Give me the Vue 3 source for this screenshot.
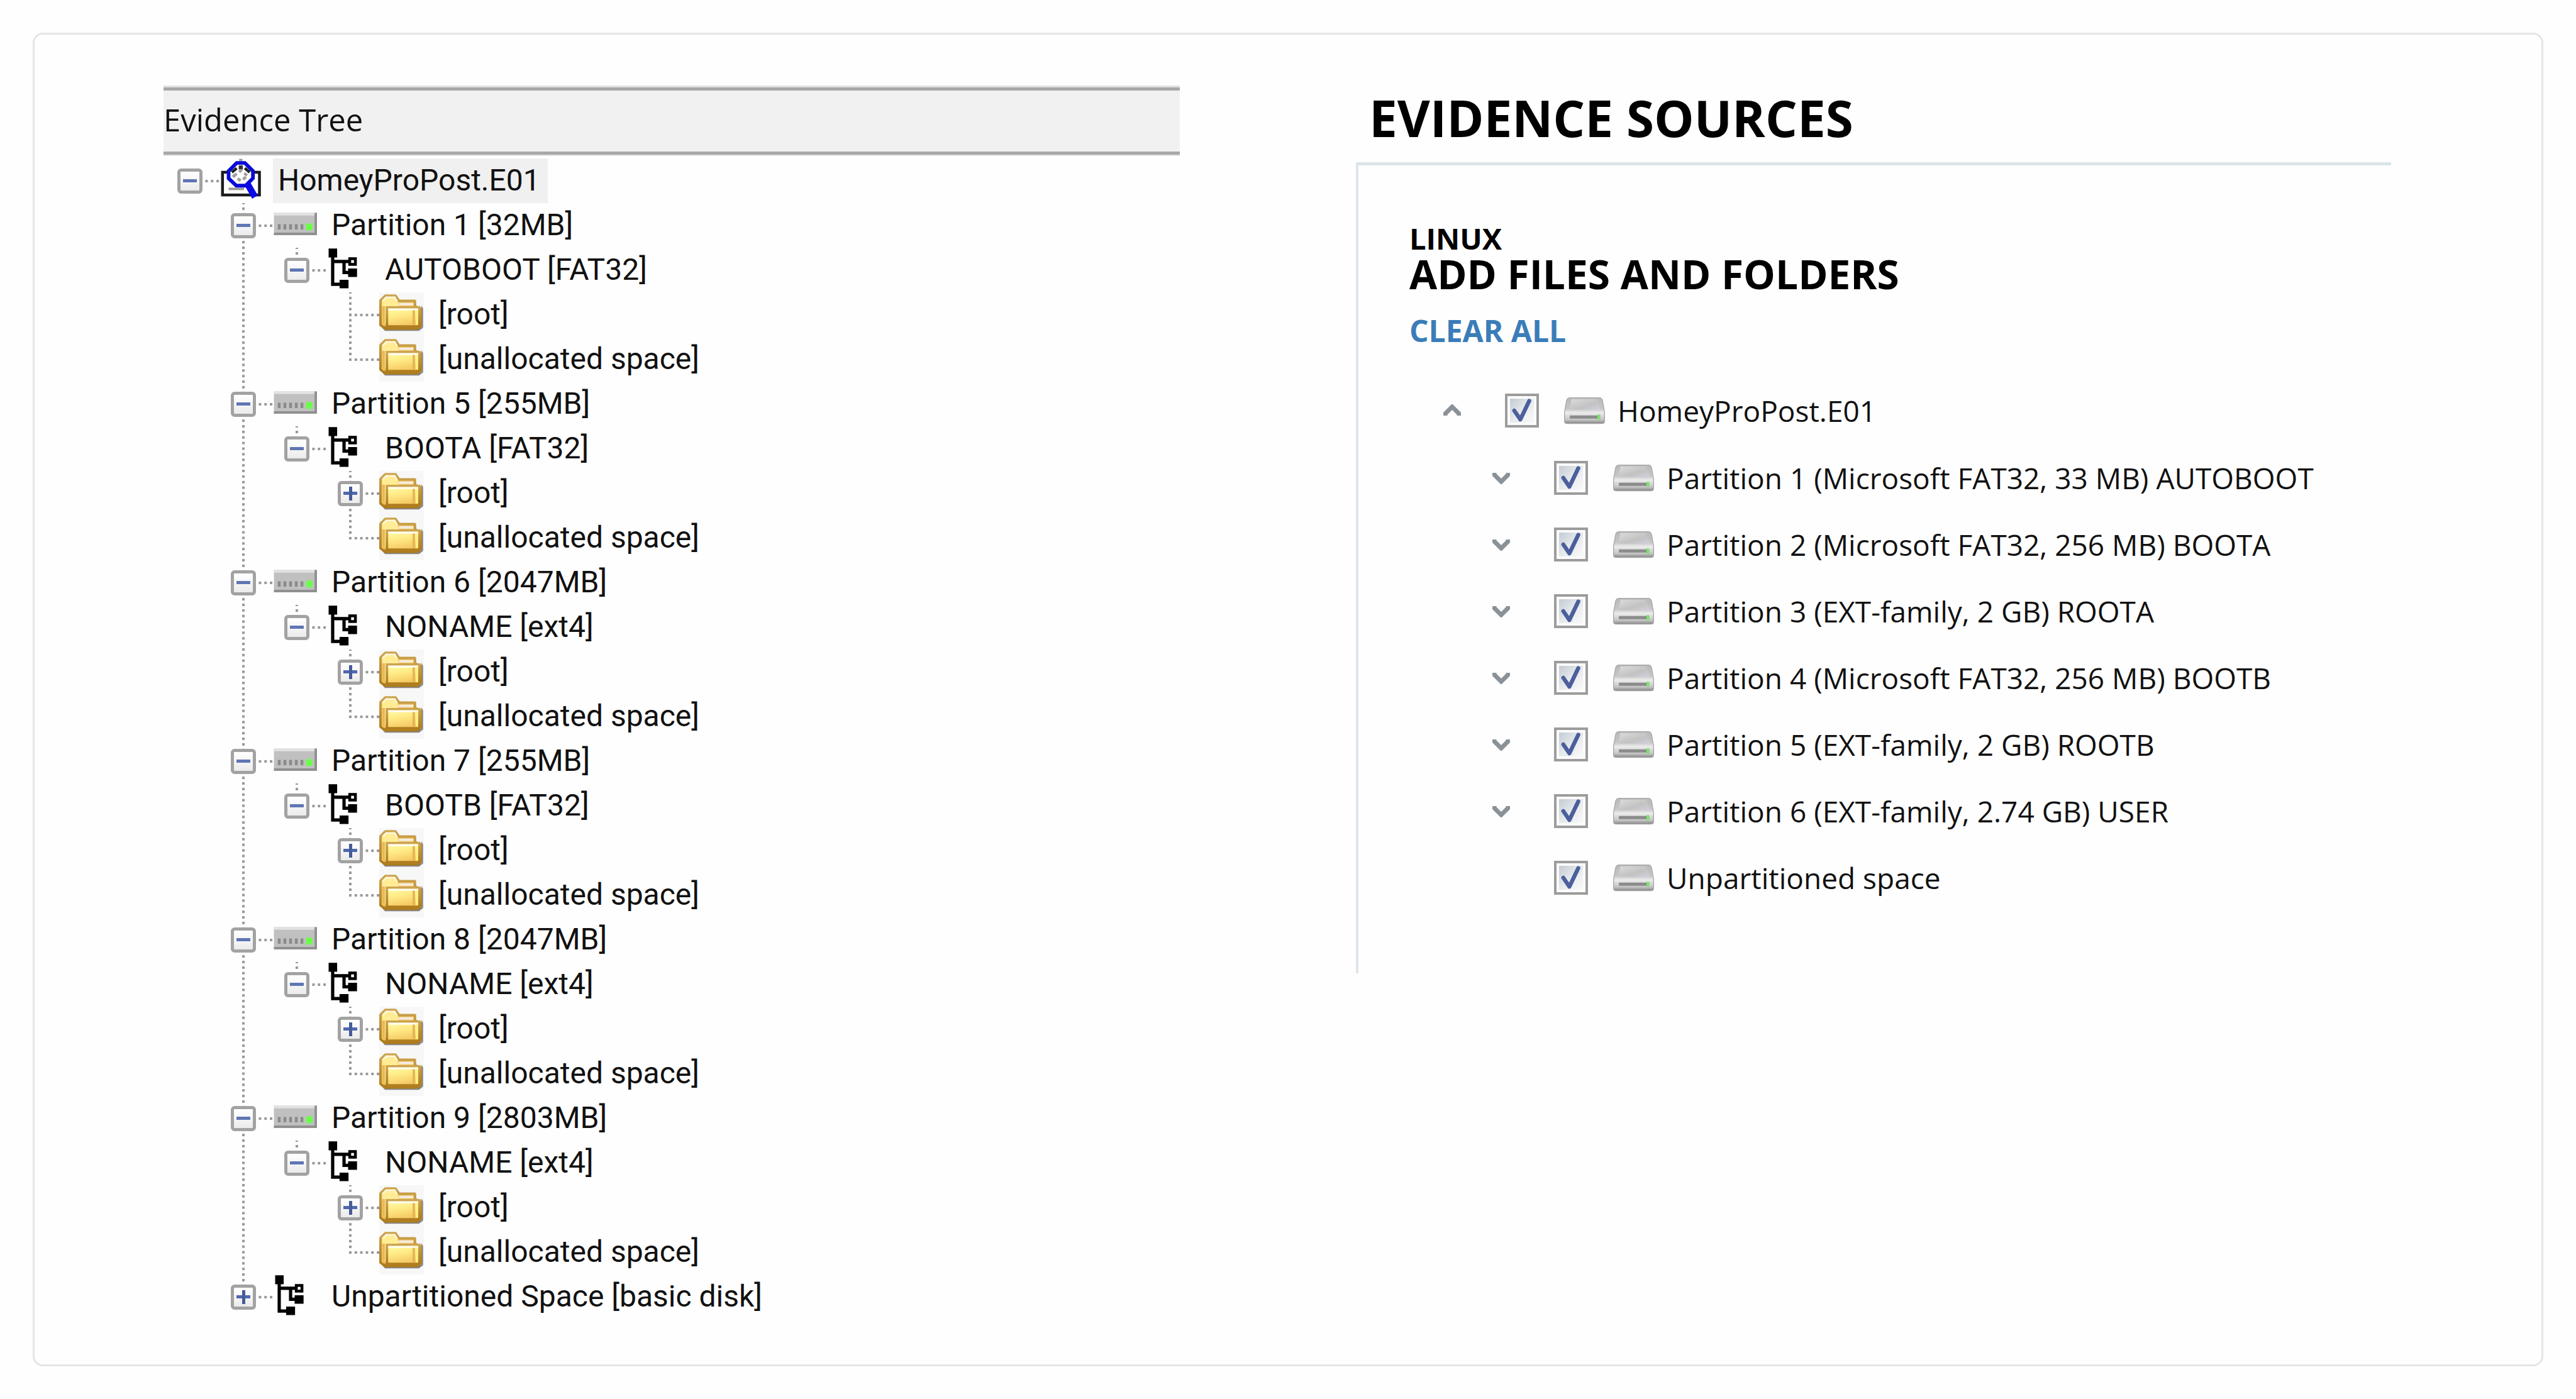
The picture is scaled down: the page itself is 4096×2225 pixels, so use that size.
<script setup>
import { defineComponent, h } from 'vue'

const volume = (name, rootLeaf) => ({
  label: name,
  icon: 'volume',
  open: true,
  children: [
    { label: '[root]', icon: 'folder', leaf: rootLeaf },
    { label: '[unallocated space]', icon: 'folder', leaf: true },
  ],
})

const partition = (label, name, rootLeaf = false) => ({
  label,
  icon: 'disk',
  open: true,
  children: [volume(name, rootLeaf)],
})

const tree = [
  {
    label: 'HomeyProPost.E01',
    icon: 'image',
    open: true,
    selected: true,
    children: [
      partition('Partition 1 [32MB]', 'AUTOBOOT [FAT32]', true),
      partition('Partition 5 [255MB]', 'BOOTA [FAT32]'),
      partition('Partition 6 [2047MB]', 'NONAME [ext4]'),
      partition('Partition 7 [255MB]', 'BOOTB [FAT32]'),
      partition('Partition 8 [2047MB]', 'NONAME [ext4]'),
      partition('Partition 9 [2803MB]', 'NONAME [ext4]'),
      { label: 'Unpartitioned Space [basic disk]', icon: 'volume' },
    ],
  },
]

const sources = [
  { id: 'src-0', label: 'HomeyProPost.E01', toggle: 'up' },
  { id: 'src-1', label: 'Partition 1 (Microsoft FAT32, 33 MB) AUTOBOOT', toggle: 'down', child: true },
  { id: 'src-2', label: 'Partition 2 (Microsoft FAT32, 256 MB) BOOTA', toggle: 'down', child: true },
  { id: 'src-3', label: 'Partition 3 (EXT-family, 2 GB) ROOTA', toggle: 'down', child: true },
  { id: 'src-4', label: 'Partition 4 (Microsoft FAT32, 256 MB) BOOTB', toggle: 'down', child: true },
  { id: 'src-5', label: 'Partition 5 (EXT-family, 2 GB) ROOTB', toggle: 'down', child: true },
  { id: 'src-6', label: 'Partition 6 (EXT-family, 2.74 GB) USER', toggle: 'down', child: true },
  { id: 'src-7', label: 'Unpartitioned space', child: true },
]

const icons = {
  image: `
    <rect x="9" y="34" width="91" height="56" fill="#fff" stroke="#1c1c1c" stroke-width="7"/>
    <path d="M24 75H62" stroke="#999" stroke-width="6"/>
    <path d="M44 11H64L84 31V49L66 67H43L24 49V31Z" fill="#fff" stroke="#0a0ad8" stroke-width="9"/>
    <path d="M32 34L44 24M76 34L64 24" stroke="#222" stroke-width="7"/>
    <path d="M54 17V27" stroke="#333" stroke-width="10"/>
    <path d="M37 43L54 30L71 43L54 55Z" fill="none" stroke="#a0a0a0" stroke-width="7" stroke-dasharray="9 7"/>
    <path d="M54 1V6" stroke="#999" stroke-width="8"/>
    <path d="M69 60L78 76L89 95" fill="none" stroke="#0a0ae6" stroke-width="16"/>`,
  disk: `
    <path d="M4 24H110V79H4Z" fill="#c0c0c0"/>
    <path d="M4 27H105" stroke="#e2e2e2" stroke-width="7"/>
    <path d="M4 76H107V24" fill="none" stroke="#909090" stroke-width="6"/>
    <path d="M17 52V65M31 52V65M45 52V65M59 52V65M73 52V65" stroke="#8a8a8a" stroke-width="7"/>
    <rect x="83" y="50" width="16" height="17" rx="3" fill="#6dfb4d"/>`,
  volume: `
    <path d="M7 2H28V24H7ZM34 79H56V100H34ZM55 51H77V72H55Z" fill="#000"/>
    <path d="M17 14V90H40M17 34H57M45 34V61H58" fill="none" stroke="#000" stroke-width="8"/>
    <rect x="59" y="27" width="14" height="14" fill="#fff" stroke="#000" stroke-width="7"/>`,
  folder: `
    <defs>
      <linearGradient id="folderFace" x1="0" y1="0" x2="0.3" y2="1"><stop offset="0" stop-color="#ffffa6"/><stop offset="0.5" stop-color="#ffea86"/><stop offset="1" stop-color="#f5c964"/></linearGradient>
      <linearGradient id="folderEdge" x1="0" y1="0" x2="0" y2="1"><stop offset="0" stop-color="#cda450"/><stop offset="1" stop-color="#ad7c1c"/></linearGradient>
    </defs>
    <rect width="110" height="110" fill="#f7f7f7"/>
    <path d="M8 88L14 95H98L108 87V40L104 32V86Z" fill="#85858c"/>
    <path d="M3 20L15 8H40L49 21H88V34L102 40V82L94 89H14L3 80Z" fill="#f0c45e" stroke="url(#folderEdge)" stroke-width="6" stroke-linejoin="round"/>
    <path d="M7 22L17 12H38L47 25V34H20V78H14L7 76Z" fill="#ffec94"/>
    <path d="M7 34H14V80L7 76Z" fill="#e9b95a"/>
    <path d="M8 21L17 12H38L44 22" fill="none" stroke="#fff8e0" stroke-width="4"/>
    <path d="M49 26H84V32H47Z" fill="#f4ece2"/>
    <path d="M19 37H99V84H19Z" fill="url(#folderFace)" stroke="url(#folderEdge)" stroke-width="6"/>
    <path d="M22 42H96" stroke="#fffdf0" stroke-width="5"/>
    <path d="M85 44V80" stroke="#e0b250" stroke-width="5"/>
    <path d="M93 44V80" stroke="#fff385" stroke-width="5"/>
    <path d="M12 86H96" stroke="#b07e20" stroke-width="6"/>`,
}

const TreeNodes = defineComponent({
  name: 'TreeNodes',
  props: { nodes: { type: Array, required: true } },
  setup(props) {
    return () =>
      h('ul', { class: 'nodes' }, props.nodes.map((node) =>
        h('li', { class: 'node' }, [
          h('div', { class: 'node-row' }, [
            h('span', { class: 'gutter' }, node.leaf ? [] : [
              h('button', {
                type: 'button',
                class: ['expander', { closed: !node.open }],
                'aria-label': (node.open ? 'Collapse ' : 'Expand ') + node.label,
              }),
            ]),
            h('svg', { class: 'node-icon', viewBox: '0 0 110 110', 'aria-hidden': 'true', innerHTML: icons[node.icon] }),
            h('span', { class: ['node-label', { selected: node.selected }] }, node.label),
          ]),
          node.children ? h(TreeNodes, { nodes: node.children }) : null,
        ]),
      ))
  },
})
</script>

<template>
  <div class="page">
    <main class="card">
      <section class="tree-panel">
        <h2 class="tree-title">Evidence Tree</h2>
        <div class="tree">
          <TreeNodes :nodes="tree" />
        </div>
      </section>

      <section class="sources-panel">
        <h1 class="sources-title">EVIDENCE SOURCES</h1>
        <div class="sources-body">
          <p class="platform">LINUX</p>
          <h2 class="action-title">ADD FILES AND FOLDERS</h2>
          <a class="clear" href="#">CLEAR ALL</a>
          <ul class="sources">
            <li v-for="s in sources" :key="s.id" class="source" :class="{ child: s.child }">
              <span class="chevron-slot">
                <button v-if="s.toggle" type="button" class="chevron" :aria-label="'Toggle ' + s.label">
                  <svg viewBox="0 0 28 20" aria-hidden="true">
                    <path v-if="s.toggle === 'up'" d="M3 18V15L14 4L25 15V18" />
                    <path v-else d="M3 2V5L14 16L25 5V2" />
                  </svg>
                </button>
              </span>
              <span class="check">
                <input :id="s.id" type="checkbox" checked />
                <svg viewBox="0 0 84 84" aria-hidden="true">
                  <path d="M23 42L38 64L60 18" />
                </svg>
              </span>
              <svg class="drive" viewBox="0 0 100 66" aria-hidden="true">
                <defs>
                  <linearGradient id="driveBody" x1="0" y1="0" x2="0" y2="1">
                    <stop offset="0" stop-color="#b9b9b9" />
                    <stop offset="0.42" stop-color="#c6c6c6" />
                    <stop offset="0.58" stop-color="#ececec" />
                    <stop offset="0.85" stop-color="#c4c4c4" />
                    <stop offset="1" stop-color="#858585" />
                  </linearGradient>
                  <linearGradient id="driveLid" x1="0" y1="0" x2="1" y2="1">
                    <stop offset="0" stop-color="#dcdcdc" />
                    <stop offset="0.6" stop-color="#c2c2c2" />
                    <stop offset="1" stop-color="#d2d0de" />
                  </linearGradient>
                </defs>
                <path d="M14 1H86Q92 1 94 8L99 36V58Q99 64 92 64H8Q1 64 1 58V36L6 8Q8 1 14 1Z" fill="url(#driveBody)" stroke="#a6a6a6" stroke-width="2" />
                <path d="M18 4H82L89 30H12Z" fill="url(#driveLid)" />
                <path d="M14 48H88" stroke="#8b8b8b" stroke-width="8" />
                <path d="M85 42V54" stroke="#7be36b" stroke-width="7" />
              </svg>
              <label :for="s.id">{{ s.label }}</label>
            </li>
          </ul>
        </div>
      </section>
    </main>
  </div>
</template>

<style>
body {
  margin: 0;
  background: #fefefe;
}
</style>

<style scoped>
.page {
  box-sizing: border-box;
  min-height: 100vh;
  padding: 52px;
  display: flex;
  font-family: "Open Sans", "Noto Sans", sans-serif;
  color: #111;
}

.card {
  flex: 1;
  box-sizing: border-box;
  display: grid;
  grid-template-columns: 1616fr 1646fr;
  column-gap: 280px;
  align-items: start;
  padding: 80px 239px 60px 205px;
  border: 3px solid #e5e5e5;
  border-radius: 16px;
}

h1,
h2,
p,
ul {
  margin: 0;
  padding: 0;
}

ul,
.tree :deep(ul) {
  list-style: none;
  margin: 0;
  padding: 0;
}

.tree-title {
  padding-bottom: 4px;
  border-style: solid;
  border-color: #a8a8a8;
  border-width: 5px 0;
  background: #f1f1f1;
  box-shadow: 0 -3px 0 #e2e2e2, 0 2px 0 #e2e2e2;
  margin-top: 4px;
  font-size: 49px;
  font-weight: 400;
  line-height: 93px;
}

.tree {
  padding: 6px 0 0 22px;
  font-family: Roboto, sans-serif;
  font-size: 48px;
}

.tree :deep(.nodes .nodes) {
  margin-left: 85px;
}

.tree :deep(.node) {
  position: relative;
}

.tree :deep(.nodes .nodes > .node::before) {
  content: "";
  position: absolute;
  left: 18px;
  top: 0;
  bottom: 0;
  width: 4px;
  background-image: linear-gradient(#999 0 2px, transparent 2px 7px, #999 7px);
  background-size: 4px 9px;
  background-repeat: round;
}

.tree :deep(.nodes .nodes > .node:last-child::before) {
  bottom: auto;
  height: 36px;
}

.tree :deep(.node-row) {
  position: relative;
  display: flex;
  align-items: center;
  height: 71px;
}

.tree :deep(.gutter) {
  position: relative;
  display: flex;
  width: 66px;
}

.tree :deep(.gutter::before) {
  content: "";
  position: absolute;
  left: 18px;
  top: 50%;
  width: 53px;
  height: 4px;
  margin-top: -2px;
  background-image: linear-gradient(90deg, #999 0 4px, transparent 4px);
  background-size: 9px 4px;
  background-repeat: round;
}

.tree :deep(.expander) {
  position: relative;
  width: 40px;
  height: 40px;
  padding: 0;
  border: 5px solid #a2a2a2;
  border-radius: 6px;
  background:
    linear-gradient(#5f76b4, #5f76b4) center / 22px 5px no-repeat,
    linear-gradient(#fff, #ebebeb);
}

.tree :deep(.expander.closed) {
  background:
    linear-gradient(#465b98, #465b98) center / 5px 22px no-repeat,
    linear-gradient(#4f69b0, #4f69b0) center / 22px 5px no-repeat,
    linear-gradient(#fff, #ebebeb);
}

.tree :deep(.node-icon) {
  position: relative;
  flex: none;
  width: 71px;
  height: 71px;
}

.tree :deep(.node-label) {
  margin-left: 15px;
  padding: 0 12px 1px 8px;
  line-height: 70px;
  white-space: nowrap;
}

.tree :deep(.node-label.selected) {
  background: #f0f0f0;
}

.sources-title {
  padding: 0 0 19px 21px;
  font-size: 80px;
  font-weight: 700;
  line-height: 104px;
  color: #000;
}

.sources-body {
  padding: 86px 0 99px 81px;
  border-top: 5px solid #dce5e9;
  border-left: 4px solid #dfe5ea;
}

.platform {
  font-size: 47px;
  font-weight: 700;
  line-height: 60px;
  color: #000;
}

.action-title {
  font-size: 64px;
  font-weight: 700;
  line-height: 54px;
  color: #000;
}

.clear {
  display: block;
  margin: 33px 0 44px;
  font-size: 48px;
  font-weight: 700;
  line-height: 60px;
  color: #3a7db8;
  text-decoration: none;
}

.source {
  display: flex;
  align-items: center;
  height: 106px;
  padding-left: 54px;
  font-size: 46px;
}

.source:first-child {
  margin-bottom: 1px;
}

.source.child {
  padding-left: 132px;
}

.chevron-slot {
  width: 98px;
  display: flex;
}

.chevron {
  padding: 0;
  border: 0;
  background: none;
  width: 28px;
  height: 20px;
}

.chevron svg {
  display: block;
  width: 28px;
  height: 20px;
  fill: none;
  stroke: #8b9297;
  stroke-width: 7;
}

.check {
  display: grid;
  width: 54px;
  height: 54px;
  margin-right: 40px;
}

.check > * {
  grid-area: 1 / 1;
}

.check input {
  appearance: none;
  box-sizing: border-box;
  width: 54px;
  height: 54px;
  margin: 0;
  padding: 4px;
  border: 4px solid #9c9c9c;
  background: linear-gradient(135deg, #c3cbd3, #e6e9ec 50%, #fafafa) content-box, #fbfbfb;
}

.check svg {
  width: 54px;
  height: 54px;
  pointer-events: none;
  fill: none;
  stroke: #4c5f9c;
  stroke-width: 10;
  stroke-linejoin: round;
  stroke-linecap: round;
}

.drive {
  flex: none;
  width: 65px;
  height: 43px;
  margin-right: 20px;
}

.source label {
  white-space: nowrap;
}
</style>
